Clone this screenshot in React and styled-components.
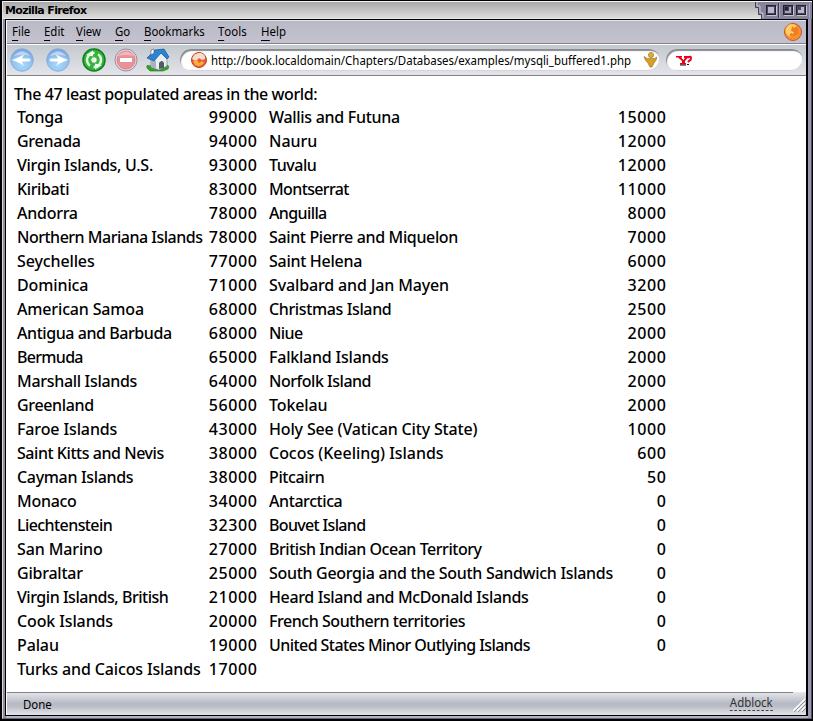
import React from 'react';
import styled, { createGlobalStyle } from 'styled-components';

const Global = createGlobalStyle`
  * { box-sizing: border-box; }
  body { margin: 0; background: #000; overflow: hidden; }
`;

const Frame = styled.div`
  width: 813px;
  height: 721px;
  border: 1px solid #000;
  border-width: 1px 1px 2px 2px;
  background: #8e8c9e;
  display: flex;
  flex-direction: column;
  font-family: "Noto Sans", sans-serif;
  color: #000;
`;
const TitleBar = styled.header`
  height: 18px;
  display: flex;
  justify-content: space-between;
  border-top: 1px solid #f4f4f4;
  border-left: 1px solid #e4e2ea;
  border-bottom: 1px solid #e8e8e8;
  background: linear-gradient(#a9a9a9, #dcdcdc);
`;
const Title = styled.h1`
  margin: 0;
  padding-left: 2px;
  font: 700 11px/17px "DejaVu Sans", sans-serif;
  letter-spacing: -0.65px;
  white-space: nowrap;
`;
const Body = styled.div`
  flex: 1;
  min-height: 0;
  display: flex;
  padding: 0 3px 2px 3px;
  border-left: 1px solid #dcd8e6;
  border-right: 1px solid #504d60;
  background: linear-gradient(90deg, #918c98 0 3px, #b6b2c8 3px calc(100% - 3px), #9a96b4 calc(100% - 3px));
  border-bottom: 1px solid #686570;
`;
const Client = styled.main`
  flex: 1;
  display: flex;
  flex-direction: column;
  border: 1px solid #000;
  border-right-width: 2px;
  background: #fff;
  padding-left: 1px;
  margin-left: -1px;
`;
const MenuBar = styled.nav`
  height: 24px;
  display: flex;
  align-items: center;
  justify-content: space-between;
  padding: 0 4px 0 5px;
  border-top: 1px solid #e6e6f0;
  border-bottom: 1px solid #858089;
  background: linear-gradient(#b8bac6, #c5c2d0);
`;
const Menus = styled.div`
  display: flex;
  margin-top: -2px;
`;
const Condensed = styled.span`
  display: inline-block;
  font-size: 13px;
  white-space: nowrap;
  transform: scaleX(0.88);
  transform-origin: ${(p) => p.$from || 'left'} center;
`;
const Menu = styled(Condensed)`
  width: ${(p) => p.$w}px;
  line-height: 20px;
`;
const Key = styled.span`
  display: inline-block;
  line-height: 17px;
  border-bottom: 1px solid #000;
`;
const Toolbar = styled.div`
  height: 32px;
  display: flex;
  align-items: center;
  padding-left: 3px;
  border-top: 1px solid #fff;
  border-bottom: 1px solid #858085;
  background: linear-gradient(#c3c9d0, #e3e4ea);
`;
const Tool = styled.svg`
  width: 24px;
  height: 24px;
  flex: none;
  margin-right: ${(p) => p.$gap}px;
`;
const Field = styled.div`
  width: ${(p) => p.$w}px;
  height: 22px;
  margin-right: ${(p) => p.$gap || 0}px;
  padding-left: ${(p) => p.$pad}px;
  display: flex;
  align-items: center;
  border-radius: 11px;
  background: #fff;
  box-shadow: inset 1px 2px 1px #898a8d, inset -1px -1px 1px #d2d2d5;
`;
const Url = styled.div`
  width: 431px;
  flex: none;
  padding-left: 3px;
  font-size: 13px;
  line-height: 20px;
`;
const Small = styled.svg`
  width: 18px;
  height: 18px;
  flex: none;
`;
const Page = styled.section`
  flex: 1;
  padding: 6px 0 0 7px;
  font-size: 16px;
  font-weight: 500;
  line-height: 24px;
`;
const Intro = styled.p`
  margin: 0;
  white-space: nowrap;
  letter-spacing: -0.4px;
`;
const Columns = styled.div`
  display: flex;
  gap: 12px;
  padding-left: 3px;
  margin-top: -1px;
`;
const List = styled.div`
  width: ${(p) => p.$w}px;
`;
const Row = styled.div`
  height: 24px;
  display: flex;
  justify-content: space-between;
  white-space: nowrap;
`;
const Name = styled.span`
  letter-spacing: ${(p) => p.$track}px;
`;
const Count = styled.span`
  letter-spacing: 0.65px;
  margin-right: -0.65px;
`;
const Status = styled.footer`
  height: 23px;
  display: flex;
  justify-content: space-between;
  font-size: 13px;
  line-height: 23px;
  background: linear-gradient(#e4e7eb, #b7bac4 50%, #b9bbc5 60%, #e2e4e8);
`;
const StatusText = styled.div`
  flex: 1;
  display: flex;
  justify-content: space-between;
  padding: 0 20px 0 16px;
  border-top: 1px solid #858388;
`;
const Adblock = styled(Condensed)`
  height: 18px;
  line-height: 18px;
  color: #333;
  border-bottom: 1px dashed #333;
`;
const Grip = styled.svg`
  width: 13px;
  height: 23px;
`;

const MENUS = [
  ['File', 32], ['Edit', 32], ['View', 39], ['Go', 29],
  ['Bookmarks', 74], ['Tools', 43], ['Help', 40],
];

// [name, population, pixels by which the name is tightened]
const LEFT = [
  ['Tonga', 99000, 0], ['Grenada', 94000, 1], ['Virgin Islands, U.S.', 93000, 3], ['Kiribati', 83000, 2],
  ['Andorra', 78000, 1], ['Northern Mariana Islands', 78000, 9], ['Seychelles', 77000, 0], ['Dominica', 71000, 0],
  ['American Samoa', 68000, 0.5], ['Antigua and Barbuda', 68000, 6], ['Bermuda', 65000, 4], ['Marshall Islands', 64000, 3],
  ['Greenland', 56000, 2], ['Faroe Islands', 43000, 0], ['Saint Kitts and Nevis', 38000, 7], ['Cayman Islands', 38000, 3],
  ['Monaco', 34000, 1], ['Liechtenstein', 32300, 6], ['San Marino', 27000, 0], ['Gibraltar', 25000, 1],
  ['Virgin Islands, British', 21000, 8], ['Cook Islands', 20000, 0], ['Palau', 19000, 0], ['Turks and Caicos Islands', 17000, 0.5],
];
const RIGHT = [
  ['Wallis and Futuna', 15000, 3], ['Nauru', 12000, -0.5], ['Tuvalu', 12000, 2], ['Montserrat', 11000, 5],
  ['Anguilla', 8000, 4], ['Saint Pierre and Miquelon', 7000, 6], ['Saint Helena', 6000, 2], ['Svalbard and Jan Mayen', 3200, 0.5],
  ['Christmas Island', 2500, 4], ['Niue', 2000, 2], ['Falkland Islands', 2000, 1.5], ['Norfolk Island', 2000, 5],
  ['Tokelau', 2000, 0], ['Holy See (Vatican City State)', 1000, 1], ['Cocos (Keeling) Islands', 600, -2], ['Pitcairn', 50, 2],
  ['Antarctica', 0, 3], ['Bouvet Island', 0, 7], ['British Indian Ocean Territory', 0, 10],
  ['South Georgia and the South Sandwich Islands', 0, 8], ['Heard Island and McDonald Islands', 0, 8],
  ['French Southern territories', 0, 9], ['United States Minor Outlying Islands', 0, 16],
];

const Areas = ({ rows, width }) => (
  <List $w={width}>
    {rows.map(([name, count, trim]) => (
      <Row key={name}><Name $track={-0.12 - trim / name.length}>{name}</Name><Count>{count}</Count></Row>
    ))}
  </List>
);

const WindowButtons = () => (
  <svg width="57" height="17" viewBox="0 0 57 17">
    <path d="M0 0H57V17H6V12H3V5H0Z" fill="#85829a" />
    <path d="M.5 0V5.500H3.500V12.500H6.500V17" fill="none" stroke="#45434e" />
    <path d="M2 0V4H5V11H8V16" fill="none" stroke="#c8c5d8" />
    <path d="M24.500 1V16M54.500 1V16" stroke="#aaa5c4" />
    <path d="M23.500 1V16" stroke="#3a3748" />
    {[11, 28, 41].map((x) => <rect key={x} x={x + 0.5} y="3.500" width="9" height="9" fill="#4a4758" stroke="#24222c" />)}
    <rect x="13" y="5" width="6" height="6" fill="#bbb7d2" />
    <path d="M30 9H34V5H36V11H30Z" fill="#a7a2bd" /><rect x="30" y="5" width="3" height="3" fill="#25232d" />
    <path d="M43 8H46V5H49V11H43Z" fill="#bbb7d2" />
    <path d="M21.500 4V13.500H12M38.500 4V13.500H29M51.500 4V13.500H42" fill="none" stroke="#c6c2d8" />
  </svg>
);

const Arrow = ({ flip, gap }) => (
  <Tool viewBox="0 0 24 24" $gap={gap}>
    <defs><radialGradient id="blue" cx=".5" cy=".7" r=".65"><stop offset="0" stopColor="#a9dcfd" /><stop offset=".65" stopColor="#91c1ef" /><stop offset="1" stopColor="#7ba6dc" /></radialGradient></defs>
    <circle cx="12" cy="12" r="11.300" fill="url(#blue)" stroke="#87a9d6" strokeWidth=".8" />
    <path d="M4 8Q12-1 20 8Q12 5 4 8Z" fill="#d4e8fb" opacity=".7" />
    <path transform={flip ? 'translate(24 0) scale(-1 1)' : undefined} d="M1.500 12Q9 9.500 15 5.500Q12.500 8.500 12.500 10.300H18.500Q20.500 10.300 20.500 12T18.500 13.700H12.500Q12.500 15.500 15 18.500Q9 14.500 1.500 12Z" fill="#fff" stroke="#9cc2ea" strokeWidth=".4" />
  </Tool>
);

export default function App() {
  return (
    <>
      <Global />
      <Frame>
        <TitleBar><Title>Mozilla Firefox</Title><WindowButtons /></TitleBar>
        <Body>
          <Client>
            <MenuBar>
              <Menus>
                {MENUS.map(([m, w]) => <Menu key={m} $w={w}><Key>{m[0]}</Key>{m.slice(1)}</Menu>)}
              </Menus>
              <Small viewBox="0 0 18 18">
                <circle cx="9" cy="9" r="8.500" fill="#f5932a" stroke="#c95237" />
                <circle cx="8" cy="7.500" r="6.500" fill="#ffcf63" />
                <path d="M8 3L10 5L13 3Q16 7 14 11Q10 15 6 13Q5 11 7 10L9 11L10 9L7 8Z" fill="#ee7d25" />
              </Small>
            </MenuBar>
            <Toolbar>
              <Arrow gap={12} />
              <Arrow flip gap={12} />
              <Tool viewBox="0 0 24 24" $gap={8}>
                <circle cx="12" cy="12" r="11" fill="#32b43b" stroke="#157b21" strokeWidth="1.500" />
                <circle cx="12" cy="12" r="7" fill="none" stroke="#dcffdc" strokeWidth="2.500" strokeDasharray="18 4" transform="rotate(-55 12 12)" />
                <path d="M4 7L11 2.500V8.500ZM20 17L13 21.500V15.500Z" fill="#eaffea" />
                <circle cx="12" cy="12" r="3.300" fill="#e9f6e9" stroke="#46a94a" />
              </Tool>
              <Tool viewBox="0 0 24 24" $gap={8}>
                <circle cx="12" cy="12" r="11" fill="#e4d7dd" stroke="#9a9098" />
                <circle cx="12" cy="12" r="9" fill="#eb9298" stroke="#d9848c" />
                <path d="M4 8Q12-1 20 8Q12 6 4 8Z" fill="#f7c7ca" opacity=".7" />
                <rect x="5.500" y="9.500" width="13" height="5" rx="1" fill="#fff" stroke="#d3777f" strokeWidth=".7" />
              </Tool>
              <Tool viewBox="0 0 24 24" $gap={10}>
                <path d="M1 20Q0 16 4 18L20 17Q24 17 22 21L17 23L4 23Z" fill="#36a32e" stroke="#197716" strokeWidth=".6" />
                <path d="M5 12L9 7L15 5L21 11V18L13 22L5 19Z" fill="#e9edf2" stroke="#777f88" strokeWidth=".6" />
                <path d="M5 10L10 13V21L5 19Z" fill="#aab2bf" />
                <path d="M13 21V15Q16 11 18 15V20Z" fill="#555b64" />
                <path d="M1 10L9 2L18 1L23 9L21 11L15 5L8 13Z" fill="#2b83d4" stroke="#135796" strokeWidth=".7" />
                <path d="M5 2L8 1V5L5 7Z" fill="#fff" stroke="#555" strokeWidth=".6" />
              </Tool>
              <Field $w={480} $gap={6} $pad={10}>
                <Small viewBox="0 0 18 18">
                  <circle cx="9" cy="9" r="7.500" fill="#e86032" stroke="#c7402a" />
                  <path d="M2 8Q4 1 11 2Q16 4 15 8L12 9L9 7L6 10Z" fill="#f1dfcf" />
                  <path d="M3 10L7 9L9 12L12 10L14 12Q10 17 5 14Z" fill="#ffab3d" />
                </Small>
                <Url><Condensed>http://book.localdomain/Chapters/Databases/examples/mysqli_buffered1.php</Condensed></Url>
                <Small viewBox="0 0 18 18">
                  <circle cx="12" cy="4" r="2.600" fill="#e0ad31" stroke="#966b12" strokeWidth=".6" />
                  <path d="M5 5.500Q8 8.500 12 7.500Q15.500 8.500 18 6Q17.500 9.500 15 12L13 16H11L9 12Q6 10 5 5.500Z" fill="#d8a126" stroke="#8d6719" strokeWidth=".6" />
                </Small>
              </Field>
              <Field $w={137} $pad={10}>
                <Small viewBox="0 0 18 18">
                  <path d="M0 5H6V6.500H5L7.500 9L9 7H8V5H13V6.500H12L9 10V12H10V13.500H4V12H6V10L2 6.500H0Z" fill="#ec0017" />
                  <path d="M11.500 6.500Q15.500 4.500 15 7.500Q15 9 13 10L12 11" fill="none" stroke="#ec0017" strokeWidth="2" />
                  <path d="M4 14H10M11 13.500H13" stroke="#300" />
                </Small>
              </Field>
            </Toolbar>
            <Page>
              <Intro>The 47 least populated areas in the world:</Intro>
              <Columns>
                <Areas rows={LEFT} width={240} />
                <Areas rows={RIGHT} width={397} />
              </Columns>
            </Page>
            <Status>
              <StatusText><Condensed>Done</Condensed><Adblock $from="right">Adblock</Adblock></StatusText>
              <Grip viewBox="0 0 13 23"><path d="M0 19L12 7M4 19L12 11M8 19L12 15" stroke="#fff" strokeWidth="1.500" /><path d="M1 20L13 8M5 20L13 12M9 20L13 16" stroke="#8f909a" /></Grip>
            </Status>
          </Client>
        </Body>
      </Frame>
    </>
  );
}
